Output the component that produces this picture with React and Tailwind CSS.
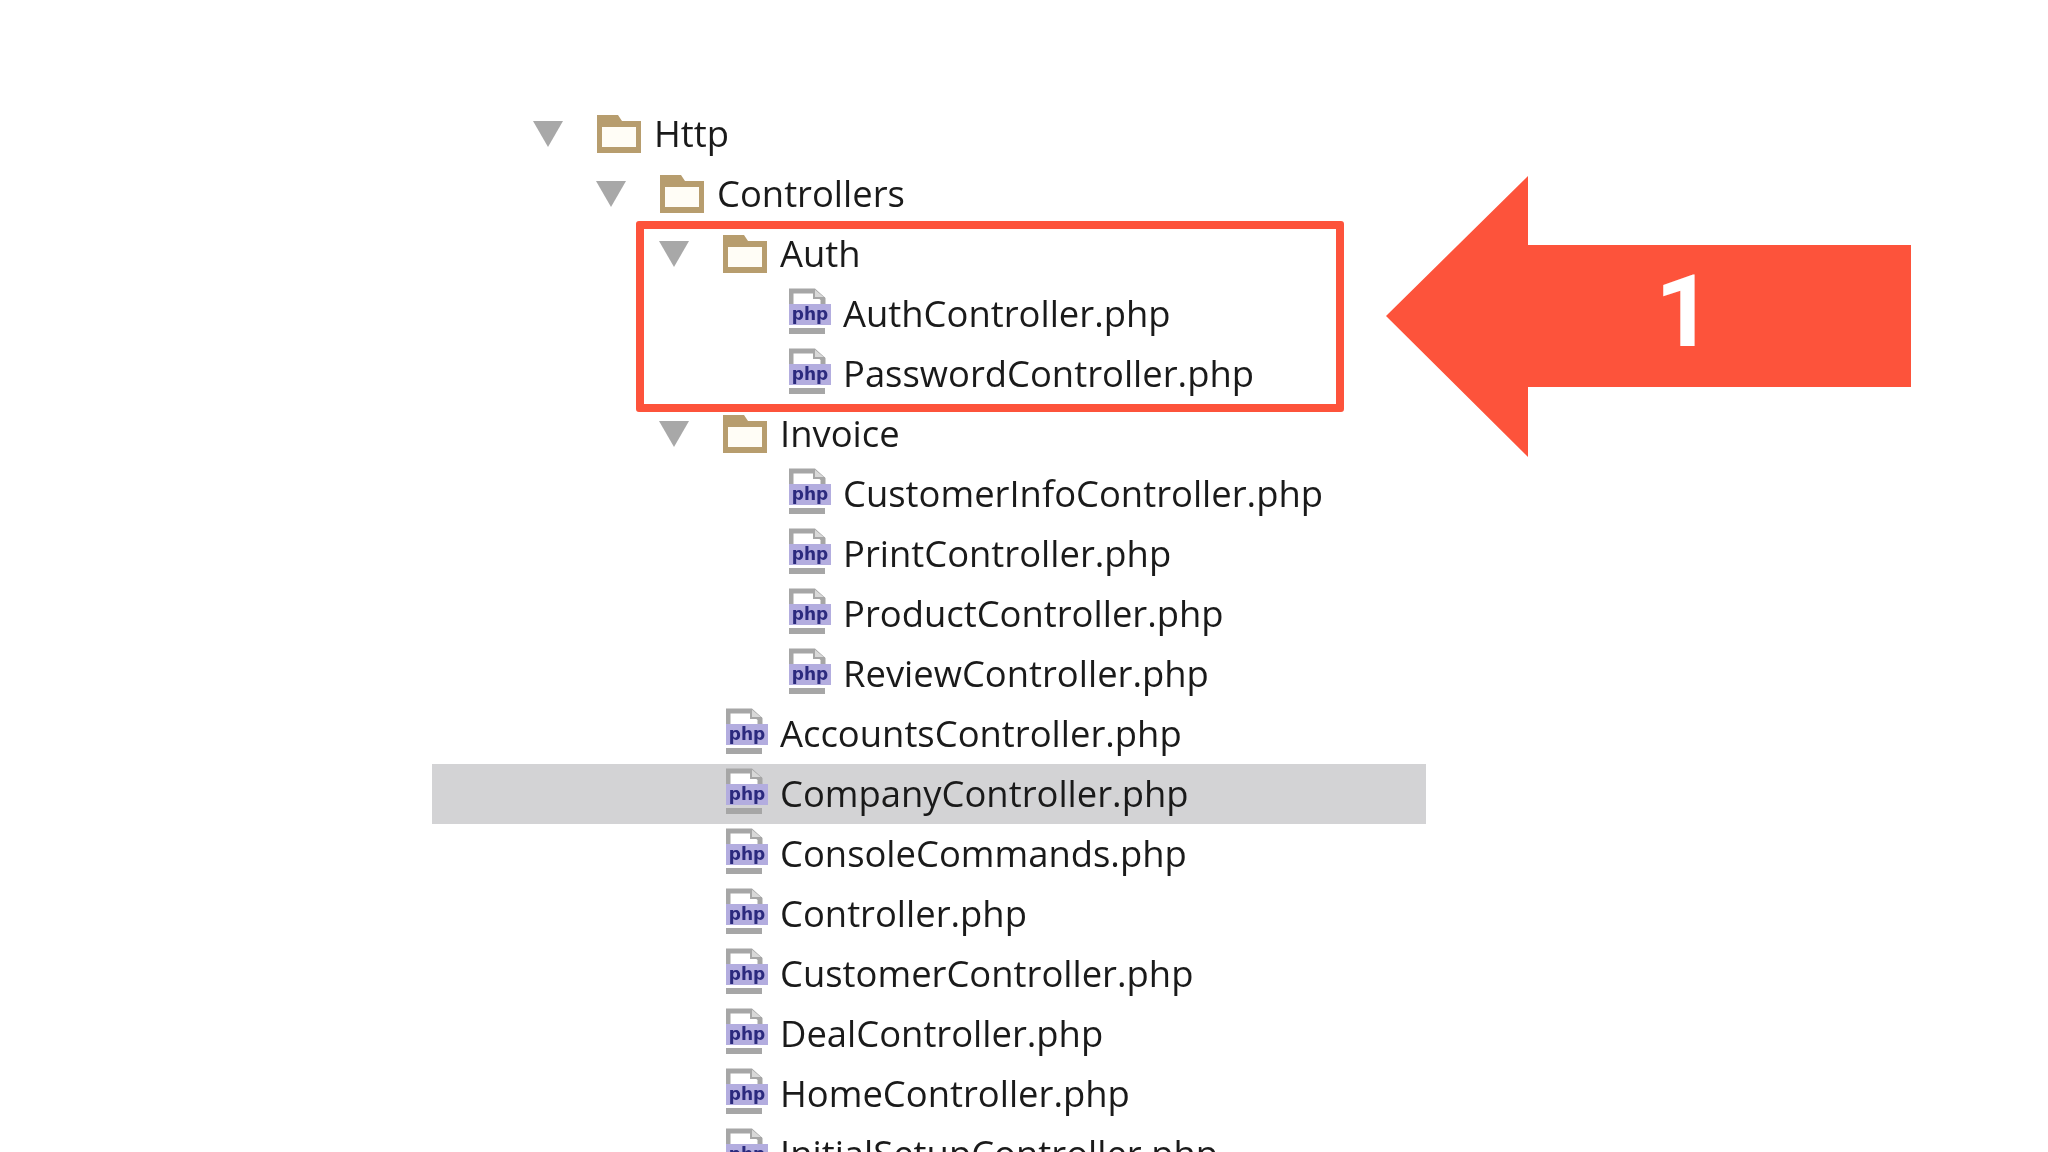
const rows = [
  { type: "folder", depth: 0, name: "Http" },
  { type: "folder", depth: 1, name: "Controllers" },
  { type: "folder", depth: 2, name: "Auth" },
  { type: "file", depth: 3, name: "AuthController.php" },
  { type: "file", depth: 3, name: "PasswordController.php" },
  { type: "folder", depth: 2, name: "Invoice" },
  { type: "file", depth: 3, name: "CustomerInfoController.php" },
  { type: "file", depth: 3, name: "PrintController.php" },
  { type: "file", depth: 3, name: "ProductController.php" },
  { type: "file", depth: 3, name: "ReviewController.php" },
  { type: "file", depth: 2, name: "AccountsController.php" },
  { type: "file", depth: 2, name: "CompanyController.php", selected: true },
  { type: "file", depth: 2, name: "ConsoleCommands.php" },
  { type: "file", depth: 2, name: "Controller.php" },
  { type: "file", depth: 2, name: "CustomerController.php" },
  { type: "file", depth: 2, name: "DealController.php" },
  { type: "file", depth: 2, name: "HomeController.php" },
  { type: "file", depth: 2, name: "InitialSetupController.php" },
];

const indent = ["pl-[101px]", "pl-[164px]", "pl-[227px]", "pl-[290px]"];

function Triangle() {
  return (
    <svg width="30" height="26" viewBox="0 0 30 26" className="block blur-[0.5px]">
      <path d="M0 0H30L15 26Z" fill="#a8a8a8" />
    </svg>
  );
}

function Folder() {
  return (
    <svg width="44" height="38" viewBox="0 0 44 38" className="block blur-[0.4px]">
      <path d="M0 0H21L25 6H44V38H0Z" fill="#b79d6e" />
      <rect x="5" y="12" width="34" height="20" fill="#fffdf6" />
    </svg>
  );
}

function PhpIcon() {
  return (
    <svg width="42" height="46" viewBox="0 0 42 46" className="block blur-[0.4px]">
      <path d="M2 16V3H25L34 11V16" fill="#ffffff" stroke="#a6a6a6" strokeWidth="5" />
      <path d="M25 1V10H36" fill="#d8d8d8" stroke="#a6a6a6" strokeWidth="2" />
      <rect x="0" y="16" width="42" height="21" fill="#b3addf" />
      <text x="21" y="32" textAnchor="middle" fontFamily="'DejaVu Sans', sans-serif" fontWeight="700" fontSize="17" fill="#2b2a7e">php</text>
      <rect x="0" y="40" width="36" height="6" fill="#a6a6a6" />
    </svg>
  );
}

function Row({ type, depth, name, selected }) {
  return (
    <div className={`flex h-[60px] items-center ${indent[depth]} ${selected ? "bg-[#d3d3d5]" : ""}`}>
      <div className="w-[64px] shrink-0">{type === "folder" && <Triangle />}</div>
      <div className="w-[57px] shrink-0">
        {type === "folder" ? <Folder /> : <div className="ml-[3px] mt-[-6px]"><PhpIcon /></div>}
      </div>
      <span className="mt-[-2px] whitespace-nowrap text-[36.4px] leading-none text-[#1a1a1a] [font-family:'Open_Sans',sans-serif] blur-[0.6px]">
        {name}
      </span>
    </div>
  );
}

export default function App() {
  return (
    <div className="relative h-[1152px] w-[2048px] overflow-hidden bg-white">
      <div className="ml-[432px] w-[994px] pt-[104px]">
        {rows.map((r) => (
          <Row key={r.name} {...r} />
        ))}
      </div>
      <div className="absolute left-[636px] top-[221px] h-[191px] w-[708px] rounded-[3px] border-[8px] border-[#fd533b]" />
      <svg width="525" height="281" viewBox="0 0 525 281" className="absolute left-[1386px] top-[176px]">
        <path d="M0 140L142 0V69H525V211H142V281Z" fill="#fd533b" />
      </svg>
      <span className="absolute left-[1655px] top-[253px] text-[101px] font-bold leading-[118px] text-white [font-family:Roboto,sans-serif]">
        1
      </span>
    </div>
  );
}
